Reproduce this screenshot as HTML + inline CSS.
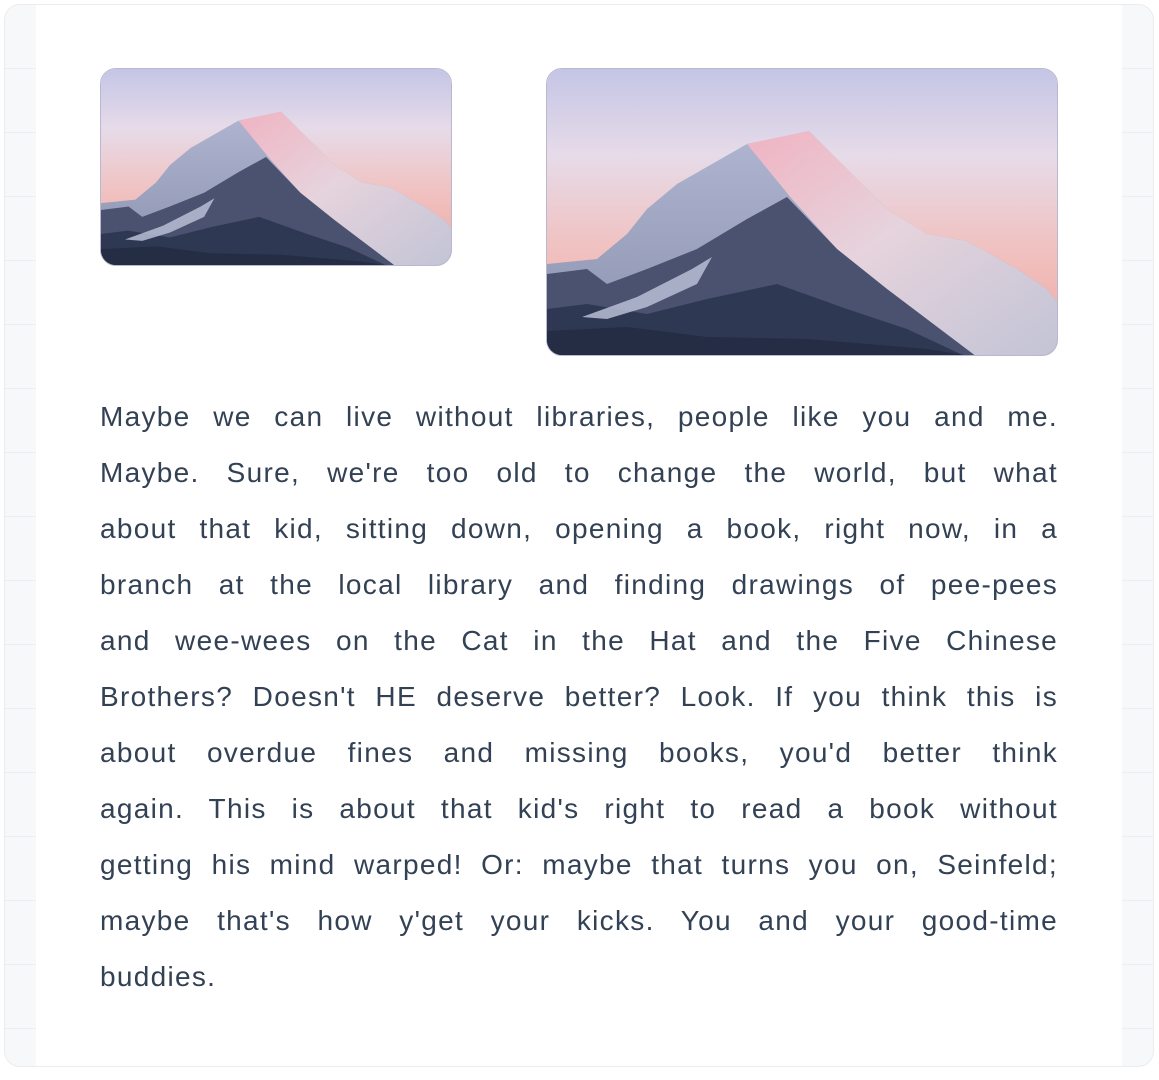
<!DOCTYPE html>
<html><head><meta charset="utf-8"><style>
html,body{margin:0;padding:0;background:#fff;}
body{width:1159px;height:1080px;position:relative;overflow:hidden;font-family:"Liberation Sans",sans-serif;}
.frame{position:absolute;left:4px;top:4px;width:1148px;height:1061px;border:1px solid #ececef;border-radius:16px;overflow:hidden;
background-color:#f7f8fa;
background-image:linear-gradient(#eceef3 1px,transparent 1px),linear-gradient(90deg,#eceef3 1px,transparent 1px);
background-size:64px 64px;background-position:0 -1px,-2px 0;}
.content{position:absolute;left:31px;top:0;width:1086px;height:1061px;background:#fff;}
.img{position:absolute;border-radius:16px;overflow:hidden;border:1px solid #b9b8d0;box-sizing:border-box;}
.text{position:absolute;left:100px;top:389px;width:958px;color:#334155;font-size:28px;line-height:56px;letter-spacing:1.3px;word-spacing:-1px;}
.text div{text-align:justify;text-align-last:justify;white-space:nowrap;}
.text div.l{text-align-last:left;}
</style></head><body>
<svg width="0" height="0" style="position:absolute">
<defs>
<linearGradient id="sky" x1="0" y1="0" x2="0" y2="1">
<stop offset="0" stop-color="#c4c5e6"/><stop offset="0.3" stop-color="#e6dbe8"/><stop offset="0.6" stop-color="#f0c3c3"/><stop offset="1" stop-color="#f0a8a0"/>
</linearGradient>
<linearGradient id="rf" x1="0" y1="0" x2="1" y2="1">
<stop offset="0" stop-color="#f0b3c2"/><stop offset="0.45" stop-color="#e6d3dc"/><stop offset="1" stop-color="#c2c4d6"/>
</linearGradient>
<linearGradient id="lf" x1="0" y1="0" x2="0" y2="1">
<stop offset="0" stop-color="#b0b6d2"/><stop offset="1" stop-color="#8a91ad"/>
</linearGradient>
<symbol id="mt" viewBox="0 0 512 288" preserveAspectRatio="none">
<rect width="512" height="288" fill="url(#sky)"/>
<path d="M0,195 L50,190 L80,165 L100,140 L130,115 L200,75 L262,62 L272,72 L300,100 L340,140 L380,165 L420,172 L470,200 L500,220 L512,235 L512,288 L0,288Z" fill="url(#lf)"/>
<path d="M200,75 L262,62 L272,72 L300,100 L340,140 L380,165 L420,172 L470,200 L500,220 L512,235 L512,288 L430,288 L340,220 L290,180 L245,130Z" fill="url(#rf)"/>
<path d="M0,205 L40,200 L60,215 L100,200 L150,180 L200,150 L240,128 L290,180 L340,220 L430,288 L0,288Z" fill="#4a5270"/>
<path d="M0,240 L40,235 L100,245 L160,230 L230,215 L300,240 L360,260 L420,288 L0,288Z" fill="#2f3852"/>
<path d="M0,262 L80,258 L160,268 L260,270 L380,280 L430,288 L0,288Z" fill="#252d45"/>
<path d="M35,248 L90,228 L145,200 L165,188 L150,215 L100,238 L60,250Z" fill="#b8bed4" opacity="0.85"/>
</symbol>
</defs></svg>
<div class="frame"><div class="content"></div></div>
<div class="img" style="left:100px;top:68px;width:352px;height:198px;"><svg width="352" height="198"><use href="#mt" width="352" height="198"/></svg></div>
<div class="img" style="left:546px;top:68px;width:512px;height:288px;"><svg width="512" height="288"><use href="#mt" width="512" height="288"/></svg></div>
<div class="text">
<div>Maybe we can live without libraries, people like you and me.</div>
<div>Maybe. Sure, we're too old to change the world, but what</div>
<div>about that kid, sitting down, opening a book, right now, in a</div>
<div>branch at the local library and finding drawings of pee-pees</div>
<div>and wee-wees on the Cat in the Hat and the Five Chinese</div>
<div>Brothers? Doesn't HE deserve better? Look. If you think this is</div>
<div>about overdue fines and missing books, you'd better think</div>
<div>again. This is about that kid's right to read a book without</div>
<div>getting his mind warped! Or: maybe that turns you on, Seinfeld;</div>
<div>maybe that's how y'get your kicks. You and your good-time</div>
<div class="l">buddies.</div>
</div>
</body></html>
